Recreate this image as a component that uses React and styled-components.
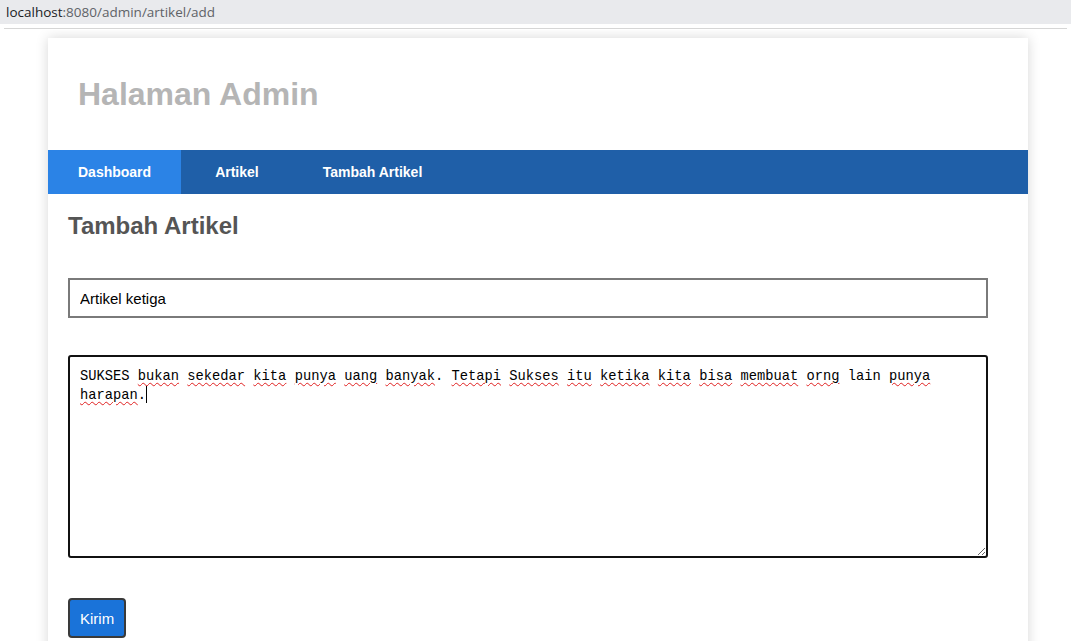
import React from 'react';
import styled, { createGlobalStyle } from 'styled-components';

const GlobalStyle = createGlobalStyle`
    html, body {
        margin: 0;
        padding: 0;
        background: #ffffff;
    }
`

const AddressBar = styled.div`
    height: 24px;
    background-color: #e9eaed;
    display: flex;
    align-items: center;
    padding: 0 6px;
    font-family: "Open Sans", "Liberation Sans", sans-serif;
    font-size: 13.5px;
    color: #5f6368;
    border-bottom: 4px solid #ffffff;
    box-shadow: 0 5px 0 -4px #d6d6d6;
`

const Host = styled.span`
    color: #202124;
`

const Page = styled.div`
    margin-top: 2px;
    padding: 8px 43px 0 48px;
    height: 603px;
    overflow: hidden;
    background: #ffffff;
`

const Container = styled.div`
    width: 980px;
    min-height: 700px;
    background: #ffffff;
    box-shadow: 0 0 12px rgba(0, 0, 0, 0.16);
    font-family: "Liberation Sans", Arial, sans-serif;
`

const Header = styled.header`
    height: 112px;
    display: flex;
    align-items: center;
    padding: 0 30px;
    box-sizing: border-box;
`

const SiteTitle = styled.h1`
    margin: 0;
    font-size: 32px;
    font-weight: 700;
    color: #b5b5b5;
`

const Nav = styled.nav`
    height: 44px;
    background-color: #1f5fa8;
    display: flex;
`

const NavLink = styled.a`
    display: flex;
    align-items: center;
    padding: 0 30px;
    margin-right: 4px;
    color: #ffffff;
    font-size: 14px;
    font-weight: 700;
    text-decoration: none;
    background-color: ${p => p.active ? '#2b83e6' : 'transparent'};
`

const Content = styled.main`
    padding: 18px 40px 0 20px;
`

const Heading = styled.h2`
    margin: 0 0 38px;
    font-size: 24px;
    font-weight: 700;
    color: #555555;
    line-height: 28px;
`

const TextInput = styled.input`
    display: block;
    width: 920px;
    height: 40px;
    box-sizing: border-box;
    border: 2px solid #7a7a7a;
    padding: 0 10px;
    font-family: "Liberation Sans", Arial, sans-serif;
    font-size: 15px;
    color: #000000;
    outline: none;
    margin-bottom: 37px;
`

const TextArea = styled.div`
    width: 920px;
    height: 203px;
    box-sizing: border-box;
    border: 2px solid #111111;
    border-radius: 3px;
    padding: 10px 10px;
    font-family: "Liberation Mono", "DejaVu Sans Mono", monospace;
    font-size: 13.75px;
    line-height: 19px;
    color: #000000;
    overflow: auto;
    resize: both;
    white-space: pre-wrap;
    margin-bottom: 40px;
`

const Typo = styled.span`
    text-decoration: underline wavy #e02020;
    text-decoration-thickness: 1px;
    text-underline-offset: 2px;
`

const Caret = styled.span`
    display: inline-block;
    width: 1px;
    height: 17px;
    background: #000000;
    vertical-align: -4px;
`

const SubmitButton = styled.button`
    height: 40px;
    padding: 0 10px;
    background-color: #1a73d9;
    color: #ffffff;
    border: 2px solid #3a3a3a;
    border-radius: 4px;
    font-family: "Liberation Sans", Arial, sans-serif;
    font-size: 15px;
`

const words = [
    ['SUKSES', false], ['bukan', true], ['sekedar', true], ['kita', true],
    ['punya', true], ['uang', true], ['banyak', true], ['.', false, true],
    ['Tetapi', true], ['Sukses', true], ['itu', true], ['ketika', true],
    ['kita', true], ['bisa', true], ['membuat', true], ['orng', true],
    ['lain', false], ['punya', true], ['harapan', true], ['.', false, true],
]

export default function App() {
    return (
        <>
            <GlobalStyle />
            <AddressBar>
                <Host>localhost</Host>:8080/admin/artikel/add
            </AddressBar>
            <Page>
                <Container>
                    <Header>
                        <SiteTitle>Halaman Admin</SiteTitle>
                    </Header>
                    <Nav>
                        <NavLink active>Dashboard</NavLink>
                        <NavLink>Artikel</NavLink>
                        <NavLink>Tambah Artikel</NavLink>
                    </Nav>
                    <Content>
                        <Heading>Tambah Artikel</Heading>
                        <TextInput defaultValue="Artikel ketiga" />
                        <TextArea>
                            {words.map(([w, typo, glued], i) => (
                                <React.Fragment key={i}>
                                    {i > 0 && !glued ? ' ' : ''}
                                    {typo ? <Typo>{w}</Typo> : w}
                                </React.Fragment>
                            ))}
                            <Caret />
                        </TextArea>
                        <SubmitButton>Kirim</SubmitButton>
                    </Content>
                </Container>
            </Page>
        </>
    )
}
